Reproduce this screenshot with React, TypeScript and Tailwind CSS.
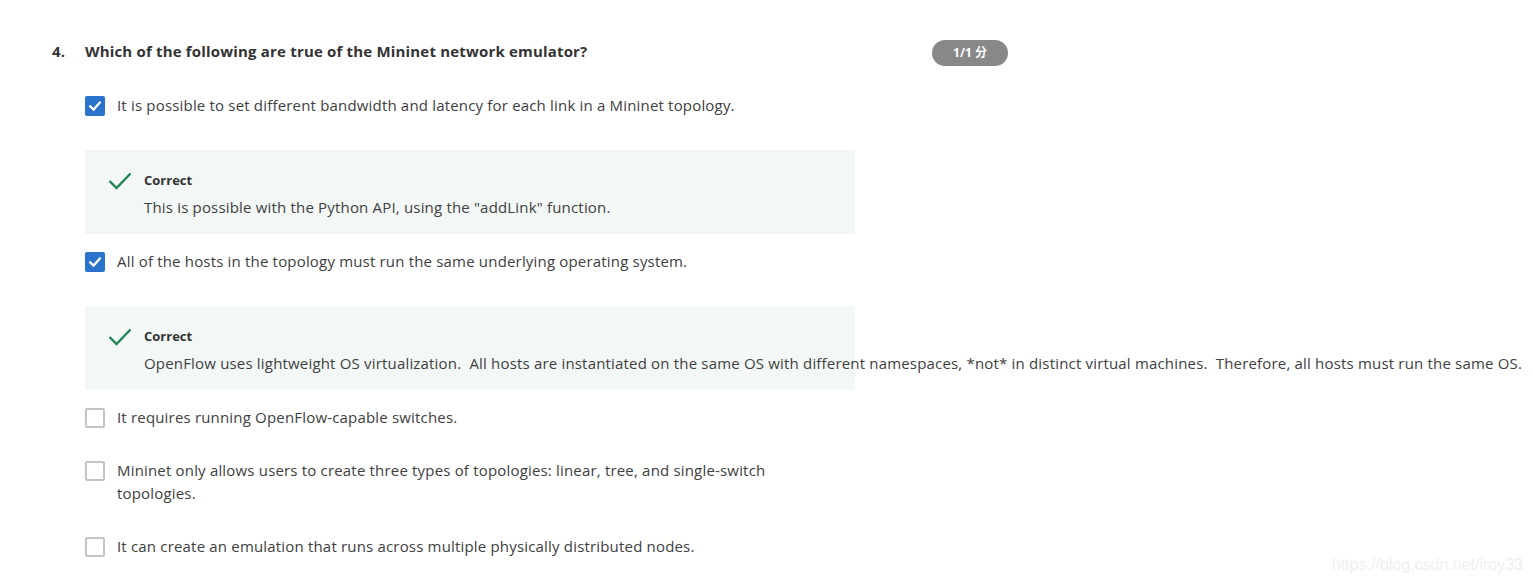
import React from 'react';

type Option = {
  text: string;
  checked: boolean;
  feedback?: string;
};

const OPTIONS: Option[] = [
  {
    text: 'It is possible to set different bandwidth and latency for each link in a Mininet topology.',
    checked: true,
    feedback: 'This is possible with the Python API, using the "addLink" function.',
  },
  {
    text: 'All of the hosts in the topology must run the same underlying operating system.',
    checked: true,
    feedback:
      'OpenFlow uses lightweight OS virtualization.  All hosts are instantiated on the same OS with different namespaces, *not* in distinct virtual machines.  Therefore, all hosts must run the same OS.',
  },
  { text: 'It requires running OpenFlow-capable switches.', checked: false },
  {
    text: 'Mininet only allows users to create three types of topologies: linear, tree, and single-switch topologies.',
    checked: false,
  },
  { text: 'It can create an emulation that runs across multiple physically distributed nodes.', checked: false },
];

function Checkbox({ checked }: { checked: boolean }) {
  if (checked) {
    return (
      <span className="grid h-5 w-5 flex-none place-items-center rounded-[2px] bg-[#2a73cc]">
        <svg width="14" height="14" viewBox="0 0 14 14" fill="none">
          <path d="M2.2 7.4 5.6 10.6 11.8 3.6" stroke="white" strokeWidth="2.2" strokeLinecap="square" />
        </svg>
      </span>
    );
  }
  return <span className="block h-5 w-5 flex-none rounded-[2px] border-2 border-[#c4c4c4] bg-white" />;
}

function Feedback({ text }: { text: string }) {
  return (
    <div className="flex h-[84px] w-[770px] gap-3 bg-[#f3f8f6] pl-[23px] pt-[20px]">
      <svg width="24" height="20" viewBox="0 0 24 20" fill="none" className="mt-[1px] flex-none">
        <path d="M1.5 10 8.5 17 22.5 2.5" stroke="#1f8354" strokeWidth="2.4" />
      </svg>
      <div>
        <div className="text-[13px] font-bold leading-5 text-[#333]">Correct</div>
        <div className="mt-[7px] whitespace-pre text-[15px] leading-5 tracking-[0.18px] text-[#404040]">
          {text}
        </div>
      </div>
    </div>
  );
}

export default function App() {
  return (
    <div
      className="relative min-h-[584px] w-full overflow-hidden bg-white"
      style={{ fontFamily: '"Open Sans", "Noto Sans CJK SC", sans-serif' }}
    >
      <div className="pl-[52px] pt-[36px]">
        {/* Question header */}
        <div className="flex items-center">
          <span className="w-[33px] text-[15px] font-bold leading-6 tracking-[0.18px] text-[#333]">4.</span>
          <span className="w-[847px] text-[15px] font-bold leading-6 tracking-[0.18px] text-[#333]">
            Which of the following are true of the Mininet network emulator?
          </span>
          <span className="mt-[4px] grid h-[26px] w-[76px] place-items-center rounded-full bg-[#888888] text-[12px] font-bold text-white">
            1/1 分
          </span>
        </div>

        {/* Options */}
        <div className="pl-[33px] pt-[30px]">
          {OPTIONS.map((opt, i) => (
            <div key={i} className={i === 0 ? '' : opt.checked || OPTIONS[i - 1].feedback ? 'mt-[18px]' : 'mt-[32px]'}>
              <div className="flex gap-3">
                <Checkbox checked={opt.checked} />
                <span className="-mt-[2px] max-w-[660px] text-[15px] leading-[23px] tracking-[0.18px] text-[#404040]">
                  {opt.text}
                </span>
              </div>
              {opt.feedback && (
                <div className="mt-[33px]">
                  <Feedback text={opt.feedback} />
                </div>
              )}
            </div>
          ))}
        </div>
      </div>

      {/* watermark */}
      <span
        className="absolute bottom-[7px] right-[10px] text-[16px] text-[#efefef]"
        style={{ fontFamily: '"Liberation Sans", Arial, sans-serif' }}
      >
        https://blog.csdn.net/iroy33
      </span>
    </div>
  );
}
